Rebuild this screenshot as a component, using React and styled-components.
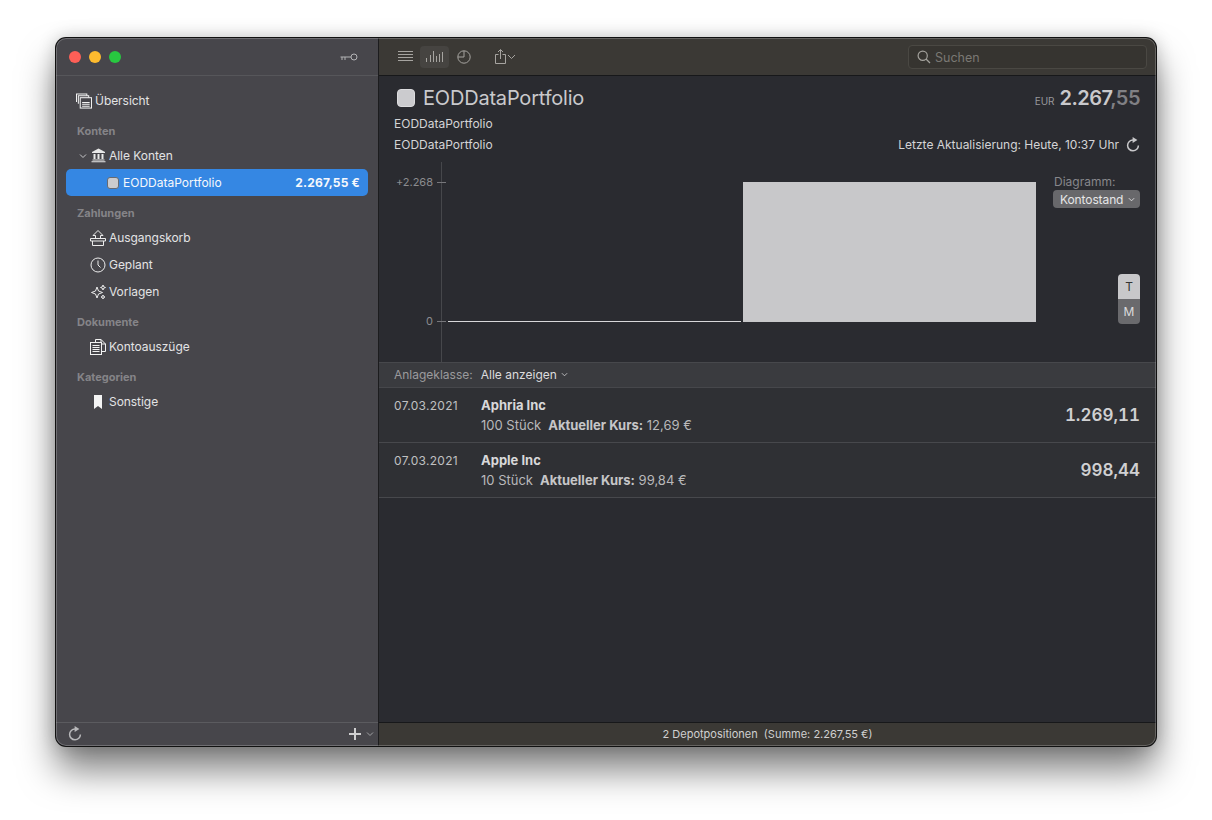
import styled, { createGlobalStyle } from "styled-components"

const Global = createGlobalStyle`
  html, body { margin: 0; padding: 0; background: #fff; }
  body { font-family: Inter, "Liberation Sans", sans-serif; -webkit-font-smoothing: antialiased; }
`
// STYLED
const Page = styled.div`
  width: 1212px;
  height: 820px;
  padding: 38px 56px 74px;
  box-sizing: border-box;
  overflow: hidden;
`
const Win = styled.div`
  position: relative;
  width: 1100px;
  height: 708px;
  display: flex;
  border-radius: 10px;
  overflow: hidden;
  background: #2a2b30;
  box-shadow: 0 0 0 1px #111, 0 24px 36px rgba(0,0,0,.5), 0 0 18px rgba(0,0,0,.22);
  &::after {
    content: "";
    position: absolute;
    inset: 0;
    border-radius: 10px;
    box-shadow: inset 0 0 0 1px rgba(255,255,255,.22);
    pointer-events: none;
  }
`
const Side = styled.aside`
  width: 323px;
  flex: none;
  display: flex;
  flex-direction: column;
  background: #47464b;
  border-right: 1px solid #1c1c1e;
  box-sizing: border-box;
`
const SideTop = styled.div`
  height: 38px;
  flex: none;
  display: flex;
  align-items: center;
  justify-content: space-between;
  padding: 0 20px 0 13px;
  border-bottom: 1px solid #56565a;
  box-sizing: border-box;
`
const Lights = styled.div`
  display: flex;
  gap: 8px;
`
const Light = styled.span`
  width: 12px;
  height: 12px;
  border-radius: 50%;
  background: ${p => p.$c};
`
const SideBody = styled.div`
  flex: 1;
  padding: 11px 10px 0;
  display: flex;
  flex-direction: column;
`
const Item = styled.div`
  height: 27px;
  display: flex;
  align-items: center;
  gap: 3px;
  padding-left: ${p => p.$indent || 24}px;
  font-size: 12px;
  letter-spacing: -.05px;
  color: #e3e3e4;
`
const IconBox = styled.span`
  width: 16px;
  height: 16px;
  display: flex;
  align-items: center;
  justify-content: center;
  flex: none;
`
const Section = styled.div`
  font-size: 11px;
  font-weight: 700;
  color: #858488;
  padding-left: 11px;
  height: 16px;
  line-height: 16px;
  margin: 9px 0 3px;
`
const Selected = styled.div`
  height: 27px;
  display: flex;
  align-items: center;
  justify-content: space-between;
  background: #3587e3;
  border-radius: 5px;
  padding: 0 8px 0 41px;
  font-size: 12px;
  color: #f6f8fc;
`
const SelName = styled.span`
  display: flex;
  align-items: center;
  gap: 4px;
`
const SelAmount = styled.span`
  font-weight: 700;
  letter-spacing: .2px;
`
const Swatch = styled.span`
  width: ${p => p.$size}px;
  height: ${p => p.$size}px;
  flex: none;
  background: #cbcbce;
  border-radius: ${p => p.$size > 12 ? 4 : 3}px;
  box-sizing: border-box;
  border: 1px solid ${p => p.$size > 12 ? "#dcdcde" : "#666a72"};
`
const SideFoot = styled.div`
  height: 24px;
  flex: none;
  display: flex;
  align-items: center;
  justify-content: space-between;
  padding: 0 4px 2px 12px;
  border-top: 1px solid #5b5b5f;
  box-sizing: border-box;
`
const FootRight = styled.div`
  display: flex;
  align-items: center;
  gap: 5px;
`
const Main = styled.main`
  flex: 1;
  min-width: 0;
  display: flex;
  flex-direction: column;
`
const Toolbar = styled.div`
  height: 38px;
  flex: none;
  display: flex;
  align-items: center;
  padding: 0 9px 0 12px;
  background: #3b3935;
  border-bottom: 1px solid #17181a;
  box-sizing: border-box;
`
const ToolBtn = styled.div`
  width: 29px;
  height: 22px;
  margin-right: ${p => p.$mr || 0}px;
  display: flex;
  align-items: center;
  justify-content: center;
  border-radius: 4px;
  background: ${p => p.$active ? "#464441" : "transparent"};
`
const Search = styled.div`
  margin-left: auto;
  width: 239px;
  height: 24px;
  display: flex;
  align-items: center;
  gap: 4px;
  padding: 1px 0 0 8px;
  box-sizing: border-box;
  border: 1px solid #4a4843;
  border-radius: 4px;
  background: #363430;
  color: #7a7873;
  font-size: 12.5px;
`
const Head = styled.div`
  height: 86px;
  flex: none;
  padding: 9px 16px 0 15px;
  box-sizing: border-box;
  display: flex;
  flex-direction: column;
`
const HeadRow = styled.div`
  display: flex;
  align-items: center;
  justify-content: space-between;
  height: ${p => p.$h}px;
  font-size: 12px;
  color: #d4d4d6;
`
const Title = styled.div`
  display: flex;
  align-items: center;
  gap: 8px;
  padding-left: 3px;
  font-size: 20px;
  color: #c9c9cc;
  letter-spacing: -.2px;
`
const Amount = styled.div`
  display: flex;
  align-items: baseline;
  gap: 5px;
  font-size: 20px;
  font-weight: 600;
  letter-spacing: -.5px;
  color: #c9c9cc;
`
const Cur = styled.span`
  font-size: 10px;
  font-weight: 400;
  letter-spacing: 0;
  color: #98989b;
`
const Cents = styled.span`
  color: #808084;
`
const Update = styled.div`
  display: flex;
  align-items: center;
  gap: 7px;
`
const ChartWrap = styled.div`
  height: 200px;
  flex: none;
  display: flex;
`
const ChartSvg = styled.svg`
  width: 665px;
  height: 200px;
  flex: none;
  display: block;
`
const ChartSide = styled.div`
  flex: 1;
  padding: 12px 16px 0 9px;
  display: flex;
  flex-direction: column;
  align-items: flex-start;
  font-size: 12px;
  color: #87878b;
`
const ChartLabel = styled.span`
  padding-left: 1px;
`
const Select = styled.div`
  width: 87px;
  height: 18px;
  margin-top: 1px;
  box-sizing: border-box;
  display: flex;
  align-items: center;
  justify-content: space-between;
  padding: 0 5px 0 7px;
  background: #68686b;
  border-radius: 4px;
  color: #e6e6e7;
  letter-spacing: -.1px;
`
const Toggle = styled.div`
  margin: 66px 0 0 65px;
  width: 22px;
  border-radius: 4px;
  overflow: hidden;
  display: flex;
  flex-direction: column;
`
const ToggleBtn = styled.div`
  height: 25px;
  display: flex;
  align-items: center;
  justify-content: center;
  font-size: 12px;
  background: ${p => p.$on ? "#c8c8ca" : "#6a6a6d"};
  color: ${p => p.$on ? "#333" : "#dcdcdd"};
`
const Filter = styled.div`
  height: 26px;
  flex: none;
  display: flex;
  align-items: center;
  padding: 0 0 1px 15px;
  background: #3a3b3f;
  border-top: 1px solid #47484c;
  border-bottom: 1px solid #46474b;
  box-sizing: border-box;
  font-size: 12px;
  color: #9a9a9d;
`
const FilterValue = styled.span`
  margin-left: 8px;
  color: #dcdcde;
  display: flex;
  align-items: center;
  gap: 4px;
`
const Rows = styled.div`
  flex: 1;
`
const Row = styled.div`
  height: 55px;
  display: grid;
  grid-template-columns: 87px 1fr auto;
  padding: 0 16px 0 15px;
  background: #2f3034;
  border-bottom: 1px solid #47484c;
  box-sizing: border-box;
  font-size: 12px;
  color: #b9b9bb;
`
const RowDate = styled.div`
  padding-top: 10px;
  line-height: 15px;
  letter-spacing: .3px;
  color: #c0c0c2;
`
const RowInfo = styled.div`
  padding-top: 10px;
  line-height: 15px;
`
const RowName = styled.div`
  font-weight: 700;
  font-size: 13px;
  color: #d8d8da;
  margin-bottom: 5px;
`
const RowLine = styled.div`
  display: flex;
  gap: 7px;
  font-size: 13px;
`
const Bold = styled.b`
  font-weight: 700;
  color: #c6c6c8;
`
const RowValue = styled.div`
  align-self: center;
  font-size: 17px;
  font-weight: 600;
  color: #d0d0d2;
  font-variant-numeric: tabular-nums;
`
const Foot = styled.div`
  height: 24px;
  flex: none;
  display: flex;
  align-items: center;
  justify-content: center;
  padding-bottom: 2px;
  background: #3b3935;
  border-top: 1px solid #17181a;
  box-sizing: border-box;
  font-size: 11px;
  color: #d0d0d0;
  white-space: pre;
`
// ICONS
const Chevron = ({ color = "#c8c8ca", size = 8 }) => (
  <svg width={size} height={size} viewBox="0 0 8 8" fill="none" stroke={color} strokeWidth="1">
    <path d="M1 2.5 L4 5.5 L7 2.5" />
  </svg>
)
const Reload = ({ color = "#c8c8ca" }) => (
  <svg width="14" height="15" viewBox="0 0 14 15" fill="none" stroke={color} strokeWidth="1.5">
    <path d="M7.2 3 A5.4 5.4 0 1 0 12.4 8.4" />
    <path d="M6.6 0 L11.4 3 L6.6 6 Z" fill={color} stroke="none" />
  </svg>
)
const Overview = () => (
  <svg width="17" height="16" viewBox="0 0 17 16" fill="none" stroke="#f2f2f2" strokeWidth="1.1">
    <path d="M.5 9 V.5 H11.5 V2.5" />
    <path d="M2.5 11 V2.5 H13.5 V4.5" />
    <rect x="4.5" y="4.5" width="12" height="11" fill="#47464b" />
    <path d="M6.5 9.5 H14.5 M6.5 11.5 H14.5 M6.5 13.5 H14.5" />
  </svg>
)
const Bank = () => (
  <svg width="15" height="15" viewBox="0 0 15 15" fill="#e8e8e8">
    <path d="M7.5 0.5 L14 4 V5 H1 V4 Z" />
    <path d="M2.5 6 H4.5 V11 H2.5 Z M6.5 6 H8.5 V11 H6.5 Z M10.5 6 H12.5 V11 H10.5 Z" />
    <path d="M1.5 11.5 H13.5 V12.5 H1.5 Z M0.5 13.2 H14.5 V14.2 H0.5 Z" />
  </svg>
)
const Outbox = () => (
  <svg width="16" height="16" viewBox="0 0 16 16" fill="none" stroke="#ececec" strokeWidth="1">
    <path d="M8 .5 L13 5.5 H10.5 V8.5 H5.5 V5.5 H3 Z" />
    <path d="M.5 8.5 H15.5 V11 H.5 Z" />
    <path d="M2.5 11 V15.5 H13.5 V11" />
  </svg>
)
const Clock = () => (
  <svg width="16" height="16" viewBox="0 0 16 16" fill="none" stroke="#ececec" strokeWidth="1">
    <circle cx="8" cy="8" r="7" />
    <path d="M8 3.5 V8 L10.5 10.5" />
  </svg>
)
const Sparkle = () => (
  <svg width="15" height="16" viewBox="0 0 15 16" fill="none" stroke="#ececec" strokeWidth="1">
    <path d="M6 3 L7.5 7 L11.5 8.5 L7.5 10 L6 14 L4.5 10 L0.5 8.5 L4.5 7 Z" />
    <path d="M12 1 L12.7 2.8 L14.5 3.5 L12.7 4.2 L12 6 L11.3 4.2 L9.5 3.5 L11.3 2.8 Z" />
    <path d="M12 11 L12.6 12.4 L14 13 L12.6 13.6 L12 15 L11.4 13.6 L10 13 L11.4 12.4 Z" />
  </svg>
)
const Docs = () => (
  <svg width="16" height="16" viewBox="0 0 16 16" fill="none" stroke="#f2f2f2" strokeWidth="1">
    <path d="M5.5 3 V0.5 H11 L15.5 5 V12.5 H12" />
    <path d="M11 0.5 V5 H15.5" />
    <rect x="0.5" y="3.5" width="11" height="12" fill="#47464b" />
    <path d="M2.5 6.5 H9.5 M2.5 8.5 H9.5 M2.5 10.5 H9.5 M2.5 12.5 H9.5" />
  </svg>
)
const Bookmark = () => (
  <svg width="10" height="14" viewBox="0 0 10 14" fill="#f4f4f4">
    <path d="M1 0 H9 V14 L5 11 L1 14 Z" />
  </svg>
)
const KeyIcon = () => (
  <svg width="18" height="8" viewBox="0 0 18 8" fill="none" stroke="#b4b4b6" strokeWidth="1">
    <circle cx="14" cy="4" r="3" />
    <path d="M11 4 H0.5 M2 4 V7 M5 4 V7" />
  </svg>
)
const ListIcon = () => (
  <svg width="15" height="11" viewBox="0 0 15 11" stroke="#a6a4a0" strokeWidth="1">
    <path d="M0 .5 H15 M0 3.5 H15 M0 6.5 H15 M0 9.5 H15" />
  </svg>
)
const BarsIcon = () => (
  <svg width="17" height="11" viewBox="0 0 17 11" stroke="#a6a4a0" strokeWidth="1">
    <path d="M.5 11 V7 M4.5 11 V4 M7.5 11 V0 M10.5 11 V5 M13.5 11 V3 M16.5 11 V1" />
  </svg>
)
const PieIcon = () => (
  <svg width="14" height="14" viewBox="0 0 14 14" fill="none" stroke="#a6a4a0" strokeWidth="1">
    <circle cx="7" cy="7" r="6.2" />
    <path d="M7 1 V7 H1" />
  </svg>
)
const ShareIcon = () => (
  <svg width="21" height="15" viewBox="0 0 21 15" fill="none" stroke="#a6a4a0" strokeWidth="1">
    <path d="M3.5 5.5 H.5 V14.5 H10.5 V5.5 H7.5" />
    <path d="M5.5 10 V.8 M3 3 L5.5 .5 L8 3" />
    <path d="M13 6 L16.5 9.5 L20 6" />
  </svg>
)
const SearchIcon = () => (
  <svg width="14" height="14" viewBox="0 0 14 14" fill="none" stroke="#a3a19c" strokeWidth="1.2">
    <circle cx="5.7" cy="5.7" r="4.6" />
    <path d="M9 9 L13 13" />
  </svg>
)
const Plus = () => (
  <svg width="12" height="12" viewBox="0 0 12 12" stroke="#cfcfd0" strokeWidth="2">
    <path d="M6 0 V12 M0 6 H12" />
  </svg>
)
const Chart = () => (
  <ChartSvg viewBox="0 0 665 200">
    <path d="M62.5 0 V200" stroke="#46474b" />
    <text x="54" y="24" textAnchor="end" fontSize="11" fontFamily="Inter, sans-serif" fill="#8b8b8f">+2.268</text>
    <path d="M58 20.5 H67" stroke="#77777b" />
    <text x="54" y="163" textAnchor="end" fontSize="11" fontFamily="Inter, sans-serif" fill="#8b8b8f">0</text>
    <path d="M58 159.5 H67" stroke="#77777b" />
    <path d="M69 159.5 H362" stroke="#d8d8da" />
    <rect x="364" y="20" width="293" height="140" fill="#c8c8ca" />
  </ChartSvg>
)
// COMPONENT
const rows = [
  { name: "Aphria Inc", qty: "100 Stück", rate: "12,69 €", value: "1.269,11" },
  { name: "Apple Inc", qty: "10 Stück", rate: "99,84 €", value: "998,44" },
]

const App = () => (
  <Page>
    <Global />
    <Win>
      <Side>
        <SideTop>
          <Lights>
            <Light $c="#fe5f57" />
            <Light $c="#febb2e" />
            <Light $c="#28c840" />
          </Lights>
          <KeyIcon />
        </SideTop>
        <SideBody>
          <Item $indent={10}><IconBox><Overview /></IconBox>Übersicht</Item>
          <Section>Konten</Section>
          <Item $indent={13}><Chevron /><IconBox><Bank /></IconBox>Alle Konten</Item>
          <Selected>
            <SelName><Swatch $size={12} />EODDataPortfolio</SelName>
            <SelAmount>2.267,55 €</SelAmount>
          </Selected>
          <Section>Zahlungen</Section>
          <Item><IconBox><Outbox /></IconBox>Ausgangskorb</Item>
          <Item><IconBox><Clock /></IconBox>Geplant</Item>
          <Item><IconBox><Sparkle /></IconBox>Vorlagen</Item>
          <Section>Dokumente</Section>
          <Item><IconBox><Docs /></IconBox>Kontoauszüge</Item>
          <Section>Kategorien</Section>
          <Item><IconBox><Bookmark /></IconBox>Sonstige</Item>
        </SideBody>
        <SideFoot>
          <Reload color="#b8b8ba" />
          <FootRight>
            <Plus />
            <Chevron color="#a0a0a3" />
          </FootRight>
        </SideFoot>
      </Side>
      <Main>
        <Toolbar>
          <ToolBtn><ListIcon /></ToolBtn>
          <ToolBtn $active><BarsIcon /></ToolBtn>
          <ToolBtn $mr={13}><PieIcon /></ToolBtn>
          <ToolBtn><ShareIcon /></ToolBtn>
          <Search><SearchIcon />Suchen</Search>
        </Toolbar>
        <Head>
          <HeadRow $h={26}>
            <Title><Swatch $size={18} />EODDataPortfolio</Title>
            <Amount><Cur>EUR</Cur><span>2.267<Cents>,55</Cents></span></Amount>
          </HeadRow>
          <HeadRow $h={24}>EODDataPortfolio</HeadRow>
          <HeadRow $h={18}>
            EODDataPortfolio
            <Update>Letzte Aktualisierung: Heute, 10:37 Uhr <Reload /></Update>
          </HeadRow>
        </Head>
        <ChartWrap>
          <Chart />
          <ChartSide>
            <ChartLabel>Diagramm:</ChartLabel>
            <Select>Kontostand <Chevron color="#e6e6e7" size={7} /></Select>
            <Toggle>
              <ToggleBtn $on>T</ToggleBtn>
              <ToggleBtn>M</ToggleBtn>
            </Toggle>
          </ChartSide>
        </ChartWrap>
        <Filter>
          Anlageklasse:
          <FilterValue>Alle anzeigen <Chevron size={7} /></FilterValue>
        </Filter>
        <Rows>
          {rows.map(r => (
            <Row key={r.name}>
              <RowDate>07.03.2021</RowDate>
              <RowInfo>
                <RowName>{r.name}</RowName>
                <RowLine>{r.qty}<span><Bold>Aktueller Kurs:</Bold> {r.rate}</span></RowLine>
              </RowInfo>
              <RowValue>{r.value}</RowValue>
            </Row>
          ))}
        </Rows>
        <Foot>2 Depotpositionen  (Summe: 2.267,55 €)</Foot>
      </Main>
    </Win>
  </Page>
)

export default App
